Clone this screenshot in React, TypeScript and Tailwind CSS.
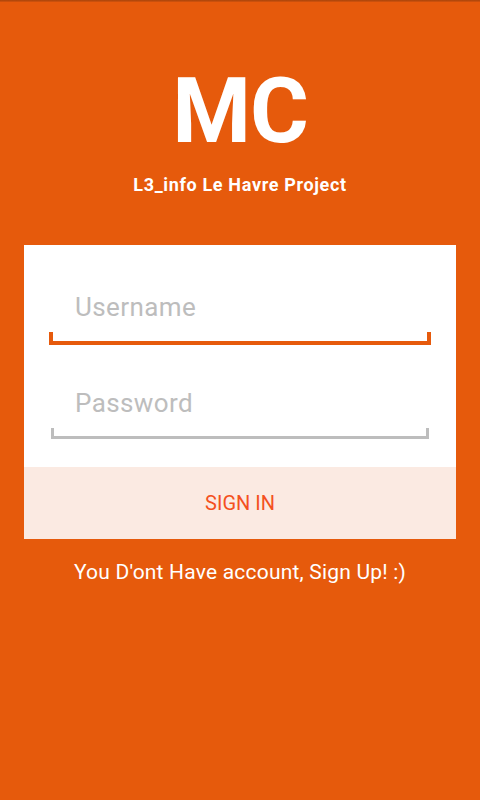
import React, { useState } from 'react';

const App = () => {
  const [username, setUsername] = useState('');
  const [password, setPassword] = useState('');

  return (
    <div className="w-full min-h-[800px] bg-[#e65a0c] flex flex-col items-center" style={{ fontFamily: 'Roboto, "Noto Sans", sans-serif' }}>
      {/* status bar shadow */}
      <div className="w-full h-[2px] bg-gradient-to-b from-[#a8440b] to-[#d4540e]" />

      <h1 className="mt-[65px] text-[90px] leading-none font-bold text-white tracking-[-1px]">MC</h1>
      <p className="mt-[19px] text-[18px] leading-none font-bold text-white tracking-[0.65px]">L3_info Le Havre Project</p>

      <div className="mt-[51px] w-[432px] bg-white flex flex-col">
        <div className="px-[25px] pt-[49px]">
          <input
            value={username}
            onChange={(e) => setUsername(e.target.value)}
            placeholder="Username"
            className="block w-full h-[26px] pl-[26px] text-[26px] leading-[26px] tracking-[0.4px] text-gray-800 placeholder:text-[#bdbdbd] outline-none bg-transparent"
          />
          <div className="mt-[12px] h-[13px] border-x-4 border-b-4 border-[#e65a0c]" />

          <input
            type="password"
            value={password}
            onChange={(e) => setPassword(e.target.value)}
            placeholder="Password"
            className="block w-full mt-[45px] h-[26px] pl-[26px] text-[26px] leading-[26px] tracking-[0.4px] text-gray-800 placeholder:text-[#bdbdbd] outline-none bg-transparent"
          />
          <div className="mt-[12px] mx-[2px] h-[11px] border-x-[3px] border-b-[3px] border-[#bdbdbd]" />
        </div>

        <button className="mt-[28px] h-[72px] w-full bg-[#fbeae2] text-[#f4511e] text-[20px] leading-none">
          SIGN IN
        </button>
      </div>

      <p className="mt-[23px] text-[21px] leading-none text-white tracking-[0.2px]">You D'ont Have account, Sign Up! :)</p>
    </div>
  );
};

export default App;
